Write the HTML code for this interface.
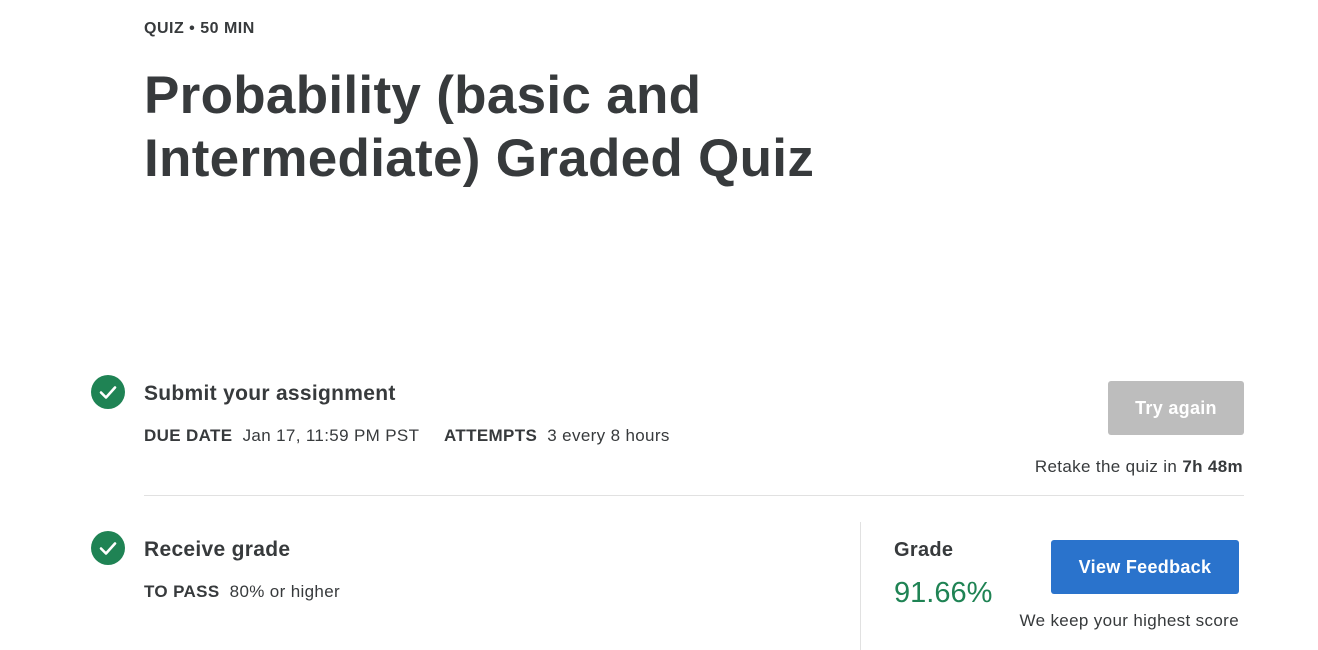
<!DOCTYPE html>
<html><head><style>
body{margin:0;width:1318px;height:650px;background:#fff;font-family:"Liberation Sans",sans-serif;color:#373a3c;position:relative;overflow:hidden}
.a{position:absolute;white-space:nowrap}
.b{font-weight:bold}
.s{font-size:17px;letter-spacing:0.35px}
.chk{position:absolute;width:34px;height:34px;border-radius:50%;background:#1f8354}
.chk svg{position:absolute;left:0;top:0}
</style></head><body>
<div class="a b" style="left:144px;top:20px;font-size:16px;letter-spacing:0.5px">QUIZ • 50 MIN</div>
<div class="a b" style="left:144px;top:64px;font-size:53px;line-height:63px;color:#373a3c;letter-spacing:0.3px">Probability (basic and<br>Intermediate) Graded Quiz</div>

<div class="chk" style="left:91px;top:375px"><svg width="34" height="34"><path d="M10 17.5l5 5 9-10" stroke="#fff" stroke-width="2.6" fill="none" stroke-linecap="round" stroke-linejoin="round"/></svg></div>
<div class="a b" style="left:144px;top:382px;font-size:21px;letter-spacing:0.3px">Submit your assignment</div>
<div class="a s" style="left:144px;top:426px"><span class="b">DUE DATE</span>&nbsp;&nbsp;Jan 17, 11:59 PM PST</div>
<div class="a s" style="left:444px;top:426px"><span class="b">ATTEMPTS</span>&nbsp;&nbsp;3 every 8 hours</div>

<div class="a b" style="left:1108px;top:381px;width:136px;height:54px;background:#bdbdbd;border-radius:3px;color:#fff;font-size:18px;line-height:54px;text-align:center;letter-spacing:0.3px">Try again</div>
<div class="a s" style="right:75px;top:457px">Retake the quiz in <span class="b">7h 48m</span></div>

<div class="a" style="left:144px;top:495px;width:1100px;height:1px;background:#e1e1e1"></div>

<div class="chk" style="left:91px;top:531px"><svg width="34" height="34"><path d="M10 17.5l5 5 9-10" stroke="#fff" stroke-width="2.6" fill="none" stroke-linecap="round" stroke-linejoin="round"/></svg></div>
<div class="a b" style="left:144px;top:538px;font-size:21px;letter-spacing:0.3px">Receive grade</div>
<div class="a s" style="left:144px;top:582px"><span class="b">TO PASS</span>&nbsp;&nbsp;80% or higher</div>

<div class="a" style="left:860px;top:522px;width:1px;height:128px;background:#e1e1e1"></div>
<div class="a b" style="left:894px;top:539px;font-size:20px;letter-spacing:0.3px">Grade</div>
<div class="a" style="left:894px;top:577px;font-size:29px;color:#1f8354">91.66%</div>
<div class="a b" style="left:1051px;top:540px;width:188px;height:54px;background:#2a73cc;border-radius:3px;color:#fff;font-size:18px;line-height:54px;text-align:center;letter-spacing:0.3px">View Feedback</div>
<div class="a s" style="right:79px;top:611px">We keep your highest score</div>
</body></html>
